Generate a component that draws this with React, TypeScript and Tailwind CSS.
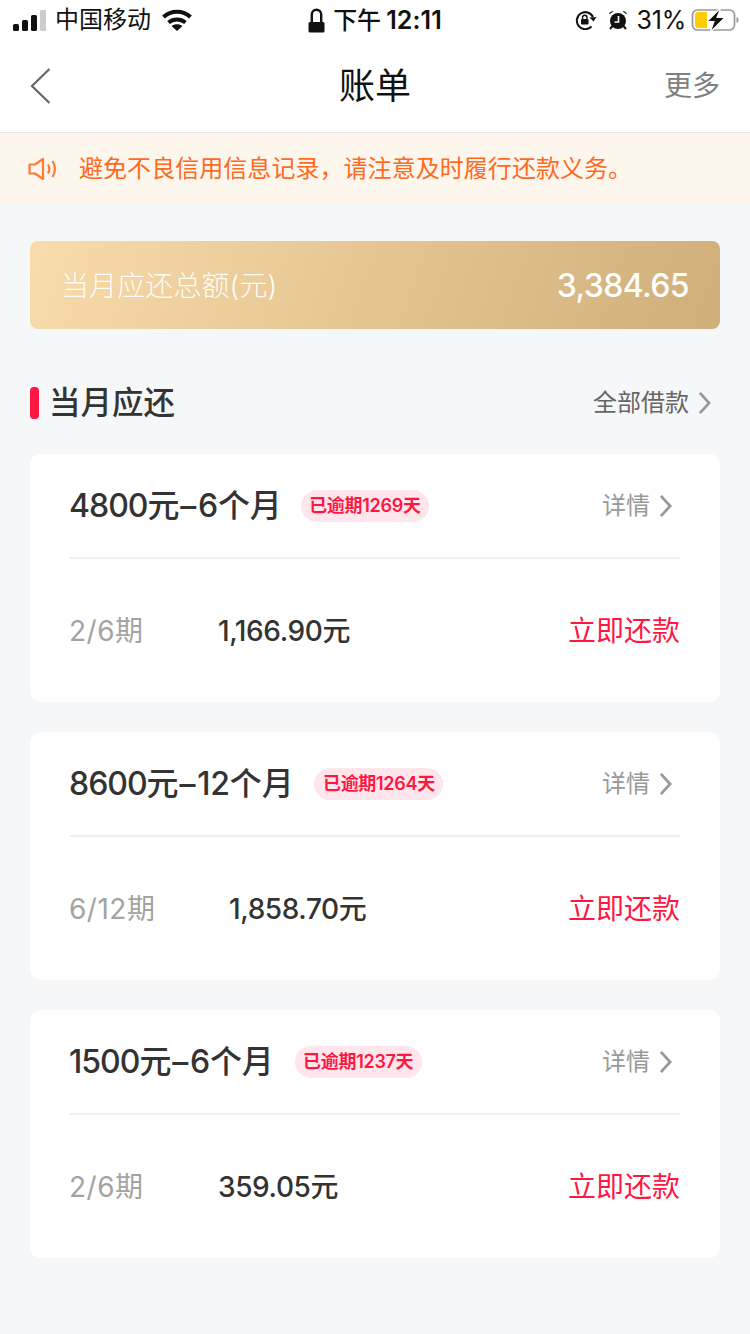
const font = { fontFamily: '"Inter", "Noto Sans CJK SC", sans-serif' };

function Chevron({ className }: { className: string }) {
  return (
    <svg viewBox="0 0 14 26" className={className} fill="none" stroke="currentColor" strokeWidth="3">
      <path d="M2 2l10 11L2 24" />
    </svg>
  );
}

function Card({ principal, term, badge, period, amount, amountClass, badgeClass }: { principal: string; term: string; badge: string; period: string; amount: string; amountClass: string; badgeClass: string }) {
  return (
    <div className="h-[248px] rounded-[10px] bg-white px-10 flex flex-col">
      <div className="h-[105px] shrink-0 flex items-center border-b-2 border-[#f0f0f2]">
        <span className="-ml-[1px] text-[32px] leading-none font-medium text-[#333] tracking-[-0.2px] whitespace-nowrap">
          <span className="tracking-[-1px]">{principal}</span>元<span className="ml-[1px] mr-[2px]">–</span>{term}
        </span>
        <span className={`h-8 px-[8.5px] rounded-full bg-[#ffe6ec] text-[#ff1744] text-[18px] font-semibold leading-8 tracking-[-0.3px] whitespace-nowrap ${badgeClass}`}>{badge}</span>
        <span className="ml-auto text-[24px] text-[#999] leading-none">详情</span>
        <Chevron className="ml-[9px] mr-[8px] w-[13px] h-[24px] text-[#999]" />
      </div>
      <div className="flex-1 flex items-center pt-[1px]">
        <span className={`-ml-[1px] text-[28px] text-[#a3a3a3] tracking-[0.5px] ${amountClass}`}>{period}</span>
        <span className="text-[28px] font-medium text-[#333] tracking-[-0.4px]">{amount}</span>
        <span className="ml-auto text-[28px] text-[#ff1744]">立即还款</span>
      </div>
    </div>
  );
}

export default function App() {
  return (
    <div style={font} className="w-[750px] h-[1334px] bg-[#f6f7f9] overflow-hidden flex flex-col">
      <div className="h-[40px] bg-white flex items-center pl-[13px] pr-[11px] text-[#111] shrink-0">
        <div className="flex items-center flex-1">
          <svg width="33" height="21" viewBox="0 0 33 21">
            <rect x="0" y="14" width="6" height="7" rx="1.500" fill="#111" />
            <rect x="9" y="10" width="6" height="11" rx="1.500" fill="#111" />
            <rect x="18" y="5" width="6" height="16" rx="1.500" fill="#111" />
            <rect x="27" y="0" width="6" height="21" rx="1" fill="#ccc" />
          </svg>
          <span className="ml-[9px] text-[24px] leading-none">中国移动</span>
          <svg width="30" height="22" viewBox="0 0 30 22" className="ml-[11px]" fill="none" stroke="#111" strokeWidth="4">
            <path d="M1.500 8C9 1 21 1 28.500 8" />
            <path d="M6.500 13.500C11.500 9.500 18.500 9.500 23.500 13.500" />
            <path d="M15 22l-5.500-5c3.200-2.400 7.800-2.400 11 0z" fill="#111" stroke="none" />
          </svg>
        </div>
        <div className="flex items-center -translate-x-[1px]">
          <svg width="17" height="25" viewBox="0 0 17 25">
            <path d="M3.800 15V6.500a4.700 4.700 0 0 1 9.400 0V15" fill="none" stroke="#111" strokeWidth="2.400" />
            <rect x="0.500" y="14" width="16" height="10.500" rx="1.500" fill="#111" />
          </svg>
          <span className="ml-[8px] text-[24px] leading-none font-medium whitespace-nowrap">
            下午<span className="ml-[5px] text-[25px] font-semibold tracking-[0.1px]">12:11</span>
          </span>
        </div>
        <div className="flex items-center flex-1 justify-end">
          <svg width="22" height="20" viewBox="0 0 22 20">
            <path d="M16.500 16.500A8.500 8.500 0 1 1 18 7" fill="none" stroke="#111" strokeWidth="2" />
            <path d="M14.500 7.500L21.500 7l-3 4.500z" fill="#111" />
            <rect x="6" y="9" width="7.500" height="5.500" rx="1" fill="#111" />
            <path d="M7.500 9V7.500a2.200 2.200 0 0 1 4.500 0V9" fill="none" stroke="#111" strokeWidth="1.400" />
          </svg>
          <svg width="20" height="20" viewBox="0 0 20 20" className="ml-[11px]">
            <circle cx="10" cy="11" r="8" fill="#111" />
            <path d="M1 4.500A3.500 3.500 0 0 1 5.500 1.500z" fill="#111" />
            <path d="M19 4.500A3.500 3.500 0 0 0 14.500 1.500z" fill="#111" />
            <path d="M2 19l2.500-3M18 19l-2.500-3" stroke="#111" strokeWidth="2" />
            <path d="M10.500 6v6H6.500" fill="none" stroke="#fff" strokeWidth="1.600" />
          </svg>
          <span className="ml-[8px] text-[25px] leading-none tracking-[-0.2px]">31%</span>
          <svg width="48" height="26" viewBox="0 0 48 26" className="ml-[5px]">
            <rect x="1.500" y="3" width="42" height="20" rx="5" fill="none" stroke="#999" strokeWidth="1.700" />
            <path d="M4 8a3 3 0 0 1 3-3h9v16H7a3 3 0 0 1-3-3z" fill="#ffcc00" />
            <path d="M45.500 10c1.500.5 2 1.500 2 3s-.5 2.500-2 3z" fill="#999" />
            <path d="M30 0.500L16 14.500h7l-4 11 15-15h-8z" fill="#111" stroke="#fff" strokeWidth="1.200" />
          </svg>
        </div>
      </div>

      <div className="h-[93px] shrink-0 bg-white border-b border-[#e6e6e6] relative flex items-center justify-between pl-[30px] pr-[30px]">
        <svg width="20" height="36" viewBox="0 0 20 36" fill="none" stroke="#666" strokeWidth="2.200">
          <path d="M19.500 1L2 18l17.500 17" />
        </svg>
        <span className="absolute left-0 right-0 text-center text-[36px] leading-none text-[#111] font-normal">账单</span>
        <span className="text-[28px] leading-none text-[#808080]">更多</span>
      </div>

      <div className="h-[71px] shrink-0 bg-[#fdf6ec] flex items-center pl-[28px] text-[#ff6a1f]">
        <svg width="30" height="24" viewBox="0 0 30 24" fill="none" stroke="#ff7a33" strokeWidth="2.200">
          <path d="M1.500 7.500h5.500L15 2v20l-8-5.500H1.500z" strokeLinejoin="round" />
          <path d="M20 7.500c1.800 3 1.800 6 0 9" />
          <path d="M24.500 4c3 5 3 11 0 16" />
        </svg>
        <span className="ml-[21px] text-[24px] tracking-[0.05px] leading-none whitespace-nowrap">避免不良信用信息记录，请注意及时履行还款义务。</span>
      </div>

      <div className="flex-1 px-[30px] pt-[37px]">
        <div className="h-[88px] rounded-[8px] bg-[linear-gradient(110deg,#f9dcab,#cfae79)] flex items-center justify-between pl-[31px] pr-[31px] pt-[2px] text-white">
          <span className="text-[28px] font-light opacity-95 tracking-[0.1px]">当月应还总额(元)</span>
          <span className="text-[32px] font-medium tracking-[-0.6px]">3,384.65</span>
        </div>

        <div className="mt-[49px] h-[50px] flex items-center">
          <div className="w-[9px] h-[32px] rounded-[4px] bg-[#ff1744]" />
          <span className="ml-[10px] text-[31.5px] font-medium text-[#333] leading-none">当月应还</span>
          <span className="ml-auto text-[24px] text-[#666] leading-none">全部借款</span>
          <Chevron className="ml-[9px] mr-[9px] w-[13px] h-[24px] text-[#999]" />
        </div>

        <div className="mt-[26px] flex flex-col gap-[30px]">
          <Card principal="4800" term="6个月" badge="已逾期1269天" period="2/6期" amount="1,166.90元" amountClass="w-[149px]" badgeClass="ml-[19px]" />
          <Card principal="8600" term="12个月" badge="已逾期1264天" period="6/12期" amount="1,858.70元" amountClass="w-[160px]" badgeClass="ml-[21px]" />
          <Card principal="1500" term="6个月" badge="已逾期1237天" period="2/6期" amount="359.05元" amountClass="w-[149px]" badgeClass="ml-[21px]" />
        </div>
      </div>
    </div>
  );
}
